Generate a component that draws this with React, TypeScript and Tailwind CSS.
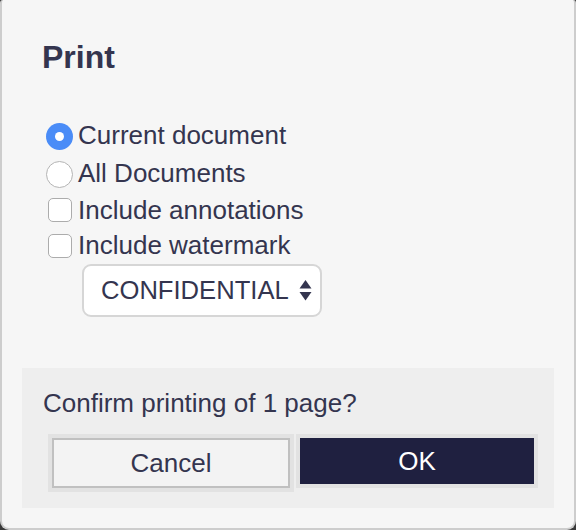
import React from "react";

export default function App() {
  const text = "text-[#34354f]";
  return (
    <div
      className="w-[576px] h-[530px] bg-[#3a3a3a]"
      style={{ fontFamily: '"Liberation Sans", Arial, Helvetica, sans-serif' }}
    >
      <div className="w-[576px] h-[530px] bg-[#f6f6f6] rounded-t-[3px] rounded-b-[9px] border-x-2 border-b-2 border-[#cdcdcd] flex flex-col">
        <h1 className={`pt-[41px] pl-[40px] text-[32px] leading-[32px] font-bold ${text}`}>Print</h1>

        <div className={`mt-[44px] flex flex-col text-[26px] leading-[26px] ${text}`}>
          <label className="h-[38px] flex items-center pl-[44px]">
            <span className="w-[27px] h-[27px] rounded-full bg-[#4a8cf7] flex items-center justify-center shrink-0">
              <span className="w-[9px] h-[9px] rounded-full bg-white" />
            </span>
            <span className="ml-[5px] mb-[3px]">Current document</span>
          </label>
          <label className="h-[38px] flex items-center pl-[44px]">
            <span className="w-[27px] h-[27px] rounded-full bg-white border border-[#b4b4b4] shrink-0" />
            <span className="ml-[5px] mb-[2px]">All Documents</span>
          </label>
          <label className="h-[34px] flex items-center pl-[46px]">
            <span className="w-[24px] h-[24px] rounded-[5px] bg-white border border-[#acacac] shrink-0" />
            <span className="ml-[6px] mb-[1px]">Include annotations</span>
          </label>
          <label className="h-[37px] flex items-center pl-[46px]">
            <span className="w-[24px] h-[24px] rounded-[5px] bg-white border border-[#acacac] shrink-0" />
            <span className="ml-[6px] mb-[1px]">Include watermark</span>
          </label>
          <div className="ml-[80px] w-[240px] h-[53px] bg-white border-2 border-[#d6d6d6] rounded-[9px] flex items-center pl-[17px] pr-[8px]">
            <span className="flex-1 mb-[1px] text-[25.6px]">CONFIDENTIAL</span>
            <svg width="13" height="22" viewBox="0 0 13 22" className="shrink-0">
              <polygon points="6.5,0 12.5,8.5 0.5,8.5" fill="#34354f" />
              <polygon points="0.5,12 12.5,12 6.5,20.5" fill="#34354f" />
            </svg>
          </div>
        </div>

        <div className="mt-[51px] mx-[20px] h-[140px] bg-[#eeeeee] pt-[22px]">
          <p className={`pl-[21px] text-[26px] leading-[26px] ${text}`}>Confirm printing of 1 page?</p>
          <div className="mt-[18px] ml-[26px] flex items-start gap-[2px]">
            <div className="p-[4px] bg-[#e2e2e2]">
              <button className={`w-[238px] h-[50px] bg-[#f3f3f3] border-2 border-[#c0c0c0] text-[26px] leading-[26px] ${text}`}>
                Cancel
              </button>
            </div>
            <div className="p-[4px] bg-[#e2e2e2]">
              <button className="w-[234px] h-[46px] bg-[#1f2040] text-white text-[26px] leading-[26px]">
                OK
              </button>
            </div>
          </div>
        </div>
      </div>
    </div>
  );
}
